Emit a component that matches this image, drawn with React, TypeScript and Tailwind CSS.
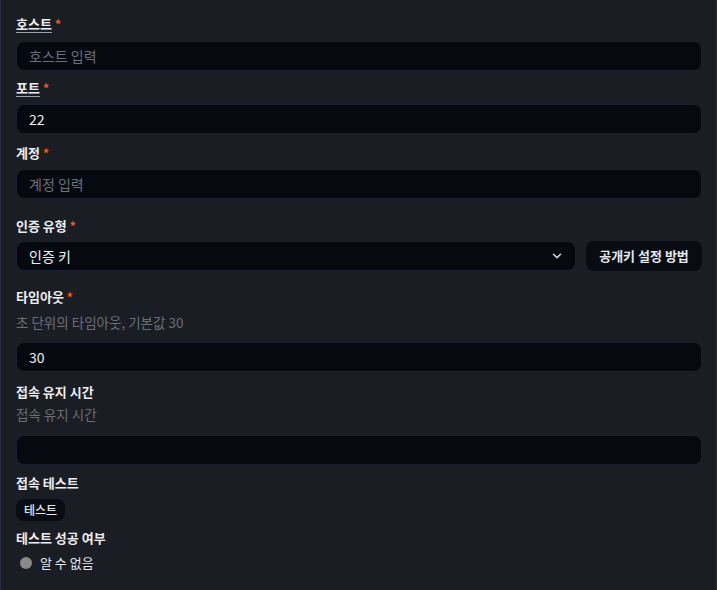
import { ChevronDown } from 'lucide-react';

const font = { fontFamily: '"Noto Sans CJK KR", "Noto Sans", sans-serif' };

function Label({ text, required, underline, className = '' }: { text: string; required?: boolean; underline?: boolean; className?: string }) {
  return (
    <div className={`flex h-5 items-center gap-[3px] text-[13px] font-bold leading-5 text-[#eceef2] ${className}`}>
      <span className={underline ? 'underline decoration-[#9ca3af] underline-offset-[3px]' : ''}>{text}</span>
      {required && <span className="text-[12px] text-[#ff5b14]">*</span>}
    </div>
  );
}

function Input({ value, placeholder, className = '' }: { value?: string; placeholder?: string; className?: string }) {
  return (
    <div className={`flex h-[30px] items-center rounded-lg border border-[#1a1e30] bg-[#070910] px-3 text-[14px] ${className}`}>
      {value ? <span className="text-[#eef0f4]">{value}</span> : <span className="text-[#6d7079]">{placeholder}</span>}
    </div>
  );
}

export default function App() {
  return (
    <div style={font} className="h-[590px] w-[717px] border-x border-[#272a3a] bg-[#1b1d25] pl-[15px] pr-[14px] pt-[14px]">
      <Label text="호스트" required underline />
      <Input placeholder="호스트 입력" className="mt-[7px]" />

      <Label text="포트" required underline className="mt-[7px]" />
      <Input value="22" className="mt-[6px]" />

      <Label text="계정" required className="mt-[9px]" />
      <Input placeholder="계정 입력" className="mt-[6px]" />

      <Label text="인증 유형" required className="mt-[17px]" />
      <div className="mt-[5px] flex gap-[10px]">
        <div className="flex h-[30px] flex-1 items-center justify-between rounded-lg border border-[#1a1e30] bg-[#070910] pl-3 pr-[11px] text-[14px] text-[#eef0f4]">
          <span>인증 키</span>
          <ChevronDown className="h-3.5 w-3.5 text-[#d4d6dc]" strokeWidth={2.75} />
        </div>
        <button className="h-[30px] w-[116px] rounded-lg bg-[#0a0c13] text-[13px] font-semibold text-[#e6e8ec]">공개키 설정 방법</button>
      </div>

      <Label text="타임아웃" required className="mt-[16px]" />
      <div className="mt-[5px] h-5 text-[13.5px] leading-5 text-[#6b6e78]">초 단위의 타임아웃, 기본값 30</div>
      <Input value="30" className="mt-[10px]" />

      <Label text="접속 유지 시간" className="mt-[10px]" />
      <div className="mt-[2px] h-5 text-[13.5px] leading-5 text-[#6b6e78]">접속 유지 시간</div>
      <Input className="mt-[11px]" />

      <Label text="접속 테스트" className="mt-[8px]" />
      <button className="mt-[6px] h-[22px] rounded-lg bg-[#0a0c13] px-2 text-[12px] font-medium text-[#e6e8ec]">테스트</button>

      <Label text="테스트 성공 여부" className="mt-[7px]" />
      <div className="mt-[5px] flex h-5 items-center gap-2 pl-1 text-[13px] text-[#e6e8ec]">
        <span className="h-3 w-3 rounded-full bg-[#8a8a8a]" />
        <span>알 수 없음</span>
      </div>
    </div>
  );
}
